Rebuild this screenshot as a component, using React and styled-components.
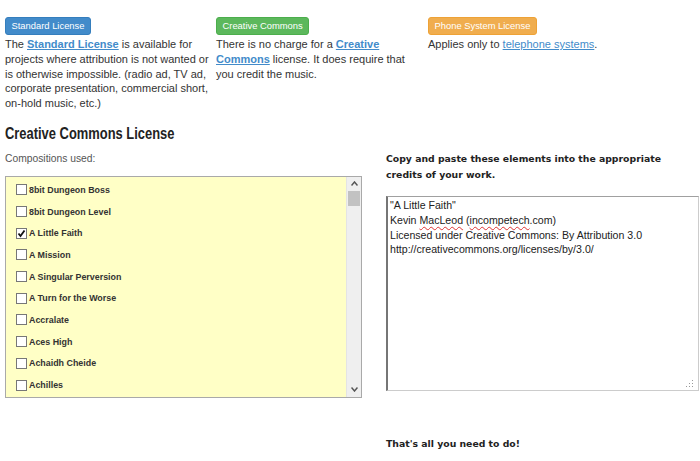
import React from "react"
import styled, { createGlobalStyle } from "styled-components"

const GlobalStyle = createGlobalStyle`
  html, body {
    margin: 0;
    padding: 0;
    background: #fff;
  }
  body {
    font-family: "Liberation Sans", Arial, sans-serif;
    color: #333;
    overflow: hidden;
  }
`

const Page = styled.div`
  width: 700px;
  height: 461px;
  padding: 15px 0 0 5px;
  box-sizing: border-box;
  overflow: hidden;
`

const LicenseRow = styled.div`
  display: grid;
  grid-template-columns: 211px 212px 200px;
`

const LicenseCol = styled.div`
  max-width: ${(p) => p.width || 200}px;
`

const colors = {
  blue: ["#428bca", "#357ebd"],
  green: ["#5cb85c", "#4cae4c"],
  orange: ["#f0ad4e", "#eea236"],
}

const Badge = styled.span`
  display: inline-block;
  font-size: 9.4px;
  line-height: 16px;
  padding: 0 5.5px;
  color: #fff;
  border-radius: 3px;
  background: ${(p) => colors[p.tone][0]};
  border: 1px solid ${(p) => colors[p.tone][1]};
`

const Blurb = styled.p`
  margin: 2px 0 0;
  font-size: 11px;
  line-height: 14.8px;
`

const Link = styled.a`
  color: #428bca;
  text-decoration: underline;
  font-weight: ${(p) => (p.strong ? "bold" : "normal")};
`

const Title = styled.h3`
  margin: 13px 0 0;
  font-weight: bold;
  font-size: 17px;
  line-height: 20px;
  color: #222;
  span {
    display: inline-block;
    transform: scaleX(0.76);
    transform-origin: left center;
    white-space: nowrap;
  }
`

const Columns = styled.div`
  display: grid;
  grid-template-columns: 381px 1fr;
  margin-top: 8px;
`

const Label = styled.div`
  font-size: 10.3px;
  line-height: 14px;
  color: #555;
  height: 24px;
`

const ListBox = styled.div`
  width: 357px;
  height: 222px;
  box-sizing: border-box;
  background: #ffffc6;
  border: 1px solid #a9a9a9;
  display: flex;
`

const Items = styled.ul`
  list-style: none;
  margin: 0;
  padding: 2px 0 0 10px;
  flex: 1;
`

const Item = styled.li`
  display: flex;
  align-items: center;
  height: 21.7px;
  font-size: 8.9px;
  font-weight: bold;
  color: #333;
`

const Box = styled.span`
  width: 11px;
  height: 11px;
  box-sizing: border-box;
  border: 1px solid #777;
  background: #fff;
  margin-right: 2px;
  position: relative;
  flex: none;
`

const Scrollbar = styled.div`
  width: 14px;
  background: #efefef;
  border-left: 1px solid #e4e4e4;
  display: flex;
  flex-direction: column;
  align-items: center;
`

const Arrow = styled.div`
  height: 14px;
  display: flex;
  align-items: center;
  justify-content: center;
`

const Thumb = styled.div`
  width: 12px;
  height: 15px;
  background: #c2c2c2;
`

const Track = styled.div`
  flex: 1;
`

const Instructions = styled.div`
  font-family: "DejaVu Sans", Verdana, sans-serif;
  font-weight: bold;
  font-size: 9.3px;
  line-height: 16px;
  color: #222;
  margin-top: -1px;
  height: 45px;
`

const Credits = styled.div`
  width: 313px;
  height: 195px;
  box-sizing: border-box;
  border: 1px solid #ccc;
  border-left: 2px solid #767676;
  border-top: 1px solid #a0a0a0;
  padding: 1px 2px;
  font-size: 10.6px;
  line-height: 14.8px;
  color: #222;
  position: relative;
`

const Squiggle = styled.span`
  text-decoration: underline wavy #d33;
  text-decoration-thickness: 1px;
  text-underline-offset: 2px;
`

const Grip = styled.svg`
  position: absolute;
  right: 4px;
  bottom: 2px;
`

const Done = styled.div`
  font-family: "DejaVu Sans", Verdana, sans-serif;
  font-weight: bold;
  font-size: 9.3px;
  line-height: 14px;
  color: #222;
  margin-top: 46px;
`

const songs = [
  ["8bit Dungeon Boss", false],
  ["8bit Dungeon Level", false],
  ["A Little Faith", true],
  ["A Mission", false],
  ["A Singular Perversion", false],
  ["A Turn for the Worse", false],
  ["Accralate", false],
  ["Aces High", false],
  ["Achaidh Cheide", false],
  ["Achilles", false],
]

const Check = () => (
  <svg width="9" height="9" viewBox="0 0 9 9" style={{ position: "absolute", left: 0, top: 0 }}>
    <path d="M1.5 4.5 L3.5 7 L7.5 1.5" stroke="#111" strokeWidth="1.8" fill="none" />
  </svg>
)

const App = () => (
  <Page>
    <GlobalStyle />
    <LicenseRow>
      <LicenseCol width={206}>
        <Badge tone="blue">Standard License</Badge>
        <Blurb>
          The <Link strong>Standard License</Link> is available for projects
          where attribution is not wanted or is otherwise impossible. (radio ad,
          TV ad, corporate presentation, commercial short, on-hold music, etc.)
        </Blurb>
      </LicenseCol>
      <LicenseCol>
        <Badge tone="green">Creative Commons</Badge>
        <Blurb>
          There is no charge for a <Link strong>Creative Commons</Link> license.
          It does require that you credit the music.
        </Blurb>
      </LicenseCol>
      <LicenseCol>
        <Badge tone="orange">Phone System License</Badge>
        <Blurb>
          Applies only to <Link>telephone systems</Link>.
        </Blurb>
      </LicenseCol>
    </LicenseRow>

    <Title>
      <span>Creative Commons License</span>
    </Title>

    <Columns>
      <div>
        <Label>Compositions used:</Label>
        <ListBox>
          <Items>
            {songs.map(([name, checked]) => (
              <Item key={name}>
                <Box>{checked && <Check />}</Box>
                {name}
              </Item>
            ))}
          </Items>
          <Scrollbar>
            <Arrow>
              <svg width="7" height="5" viewBox="0 0 7 5">
                <path d="M0.5 4.5 L3.5 1 L6.5 4.5" stroke="#555" strokeWidth="1.5" fill="none" />
              </svg>
            </Arrow>
            <Thumb />
            <Track />
            <Arrow>
              <svg width="7" height="5" viewBox="0 0 7 5">
                <path d="M0.5 0.5 L3.5 4 L6.5 0.5" stroke="#555" strokeWidth="1.5" fill="none" />
              </svg>
            </Arrow>
          </Scrollbar>
        </ListBox>
      </div>
      <div>
        <Instructions>
          Copy and paste these elements into the appropriate
          <br />
          credits of your work.
        </Instructions>
        <Credits>
          "A Little Faith"
          <br />
          Kevin <Squiggle>MacLeod</Squiggle> (<Squiggle>incompetech</Squiggle>.com)
          <br />
          Licensed under Creative Commons: By Attribution 3.0
          <br />
          http://creativecommons.org/licenses/by/3.0/
          <Grip width="8" height="8" viewBox="0 0 8 8">
            <rect x="6" y="0" width="1" height="1" fill="#999" />
            <rect x="3" y="3" width="1" height="1" fill="#999" />
            <rect x="6" y="3" width="1" height="1" fill="#999" />
            <rect x="0" y="6" width="1" height="1" fill="#999" />
            <rect x="3" y="6" width="1" height="1" fill="#999" />
            <rect x="6" y="6" width="1" height="1" fill="#999" />
          </Grip>
        </Credits>
        <Done>That's all you need to do!</Done>
      </div>
    </Columns>
  </Page>
)

export default App
